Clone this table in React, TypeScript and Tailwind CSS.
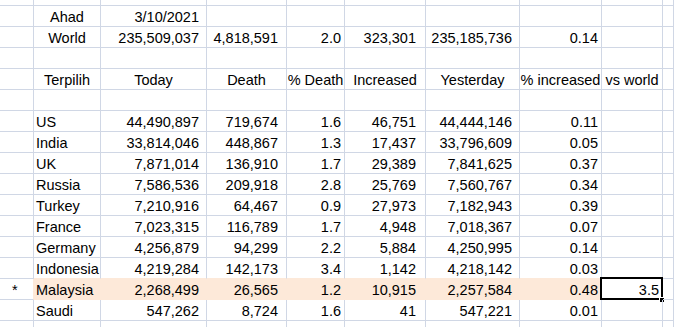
import React from 'react';

type Align = 'l' | 'c' | 'r';
type Cell = { t?: string; a?: Align };

// column widths include the 1px gridline on the right
const COLS = [
  { w: 'w-[34px]', pr: 'pr-[3px]' },
  { w: 'w-[67px]', pr: 'pr-[3px]' },
  { w: 'w-[106px]', pr: 'pr-[7px]' },
  { w: 'w-[80px]', pr: 'pr-[8px]' },
  { w: 'w-[58px]', pr: 'pr-[3px]' },
  { w: 'w-[81px]', pr: 'pr-[9px]' },
  { w: 'w-[94px]', pr: 'pr-[7px]' },
  { w: 'w-[82px]', pr: 'pr-[3px]' },
  { w: 'w-[61px]', pr: 'pr-[3px]' },
  { w: 'flex-1', pr: 'pr-[3px]' },
];

const num = (...vals: string[]): Cell[] => vals.map((t) => ({ t, a: 'r' as Align }));

const countries: [string, string, string, string, string, string, string][] = [
  ['US', '44,490,897', '719,674', '1.6', '46,751', '44,444,146', '0.11'],
  ['India', '33,814,046', '448,867', '1.3', '17,437', '33,796,609', '0.05'],
  ['UK', '7,871,014', '136,910', '1.7', '29,389', '7,841,625', '0.37'],
  ['Russia', '7,586,536', '209,918', '2.8', '25,769', '7,560,767', '0.34'],
  ['Turkey', '7,210,916', '64,467', '0.9', '27,973', '7,182,943', '0.39'],
  ['France', '7,023,315', '116,789', '1.7', '4,948', '7,018,367', '0.07'],
  ['Germany', '4,256,879', '94,299', '2.2', '5,884', '4,250,995', '0.14'],
  ['Indonesia', '4,219,284', '142,173', '3.4', '1,142', '4,218,142', '0.03'],
  ['Malaysia', '2,268,499', '26,565', '1.2', '10,915', '2,257,584', '0.48'],
  ['Saudi', '547,262', '8,724', '1.6', '41', '547,221', '0.01'],
];

const rows: Cell[][] = [
  [],
  [{}, { t: 'Ahad', a: 'c' }, { t: '3/10/2021', a: 'r' }],
  [{}, { t: 'World', a: 'c' }, ...num('235,509,037', '4,818,591', '2.0', '323,301', '235,185,736', '0.14')],
  [],
  [
    {},
    { t: 'Terpilih', a: 'c' },
    { t: 'Today', a: 'c' },
    { t: 'Death', a: 'c' },
    { t: '% Death', a: 'c' },
    { t: 'Increased', a: 'c' },
    { t: 'Yesterday', a: 'c' },
    { t: '% increased', a: 'c' },
    { t: 'vs world', a: 'c' },
  ],
  [],
  ...countries.map(([name, ...rest]) => [
    { t: name === 'Malaysia' ? '*' : undefined, a: 'l' as Align },
    { t: name, a: 'l' as Align },
    ...num(...rest),
    ...(name === 'Malaysia' ? num('3.5') : []),
  ]),
  [],
];

const HIGHLIGHT = 14; // Malaysia row index

export default function App() {
  return (
    <div
      className="w-[674px] h-[327px] overflow-hidden bg-white text-black text-[14.5px]"
      style={{ fontFamily: '"Liberation Sans", Arial, sans-serif' }}
    >
      {/* partial row above */}
      <div className="flex h-[6px]">
        {COLS.map((c, i) => (
          <div key={i} className={`${c.w} h-full border-r border-b border-[#d0d7e5]`} />
        ))}
      </div>
      {rows.slice(1).map((row, ri) => {
        const r = ri + 1;
        const hl = r === HIGHLIGHT;
        const aboveHl = r === HIGHLIGHT - 1;
        return (
          <div key={r} className="flex h-[21px]">
            {COLS.map((c, ci) => {
              const cell = row[ci] || {};
              const inFill = hl && ci >= 1 && ci <= 7;
              const selected = hl && ci === 8;
              const align =
                cell.a === 'r'
                  ? `justify-end ${c.pr}`
                  : cell.a === 'c'
                  ? 'justify-center'
                  : cell.t === '*'
                  ? 'pl-[12px]'
                  : 'pl-[2px]';
              const rightLine =
                (hl && ci <= 6) ? 'border-r-[#fde9d9]' : 'border-r-[#d0d7e5]';
              const bottomLine =
                (inFill || (aboveHl && ci >= 1 && ci <= 7)) ? 'border-b-[#fde9d9]' : 'border-b-[#d0d7e5]';
              return (
                <div
                  key={ci}
                  className={`${c.w} relative flex items-end leading-[17px] whitespace-nowrap border-r border-b ${rightLine} ${bottomLine} ${align} ${inFill ? 'bg-[#fde9d9]' : ''}`}
                >
                  {cell.t}
                  {selected && (
                    <>
                      <div className="absolute -left-[2px] -top-[2px] w-[63px] h-[23px] border-2 border-black pointer-events-none" />
                      <div className="absolute -right-[3px] -bottom-[4px] w-[6px] h-[6px] bg-black border border-white" />
                    </>
                  )}
                </div>
              );
            })}
          </div>
        );
      })}
    </div>
  );
}
